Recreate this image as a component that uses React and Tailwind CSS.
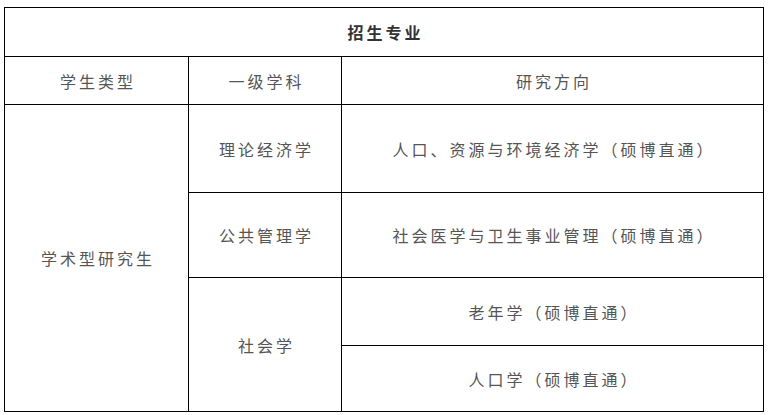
import React from "react";

const font = { fontFamily: '"Noto Sans CJK SC", "Noto Sans", sans-serif' };

function Cell({ children, className = "" }) {
  return (
    <div className={`bg-white flex items-center justify-center pl-[3px] text-[16px] tracking-[3px] ${className}`}>
      {children}
    </div>
  );
}

export default function App() {
  return (
    <div className="w-[770px] h-[415px] bg-white pl-[4px] pt-[7px]" style={font}>
      <div className="grid w-[760px] grid-cols-[183px_152px_421px] grid-rows-[48px_47px_87px_84px_67px_65px] gap-px bg-black border border-black text-[#555]">
        <Cell className="col-span-3 font-bold text-[#333]">招生专业</Cell>

        <Cell>学生类型</Cell>
        <Cell>一级学科</Cell>
        <Cell>研究方向</Cell>

        <Cell className="row-span-4">学术型研究生</Cell>
        <Cell>理论经济学</Cell>
        <Cell>人口、资源与环境经济学（硕博直通）</Cell>

        <Cell>公共管理学</Cell>
        <Cell>社会医学与卫生事业管理（硕博直通）</Cell>

        <Cell className="row-span-2">社会学</Cell>
        <Cell>老年学（硕博直通）</Cell>
        <Cell>人口学（硕博直通）</Cell>
      </div>
    </div>
  );
}
